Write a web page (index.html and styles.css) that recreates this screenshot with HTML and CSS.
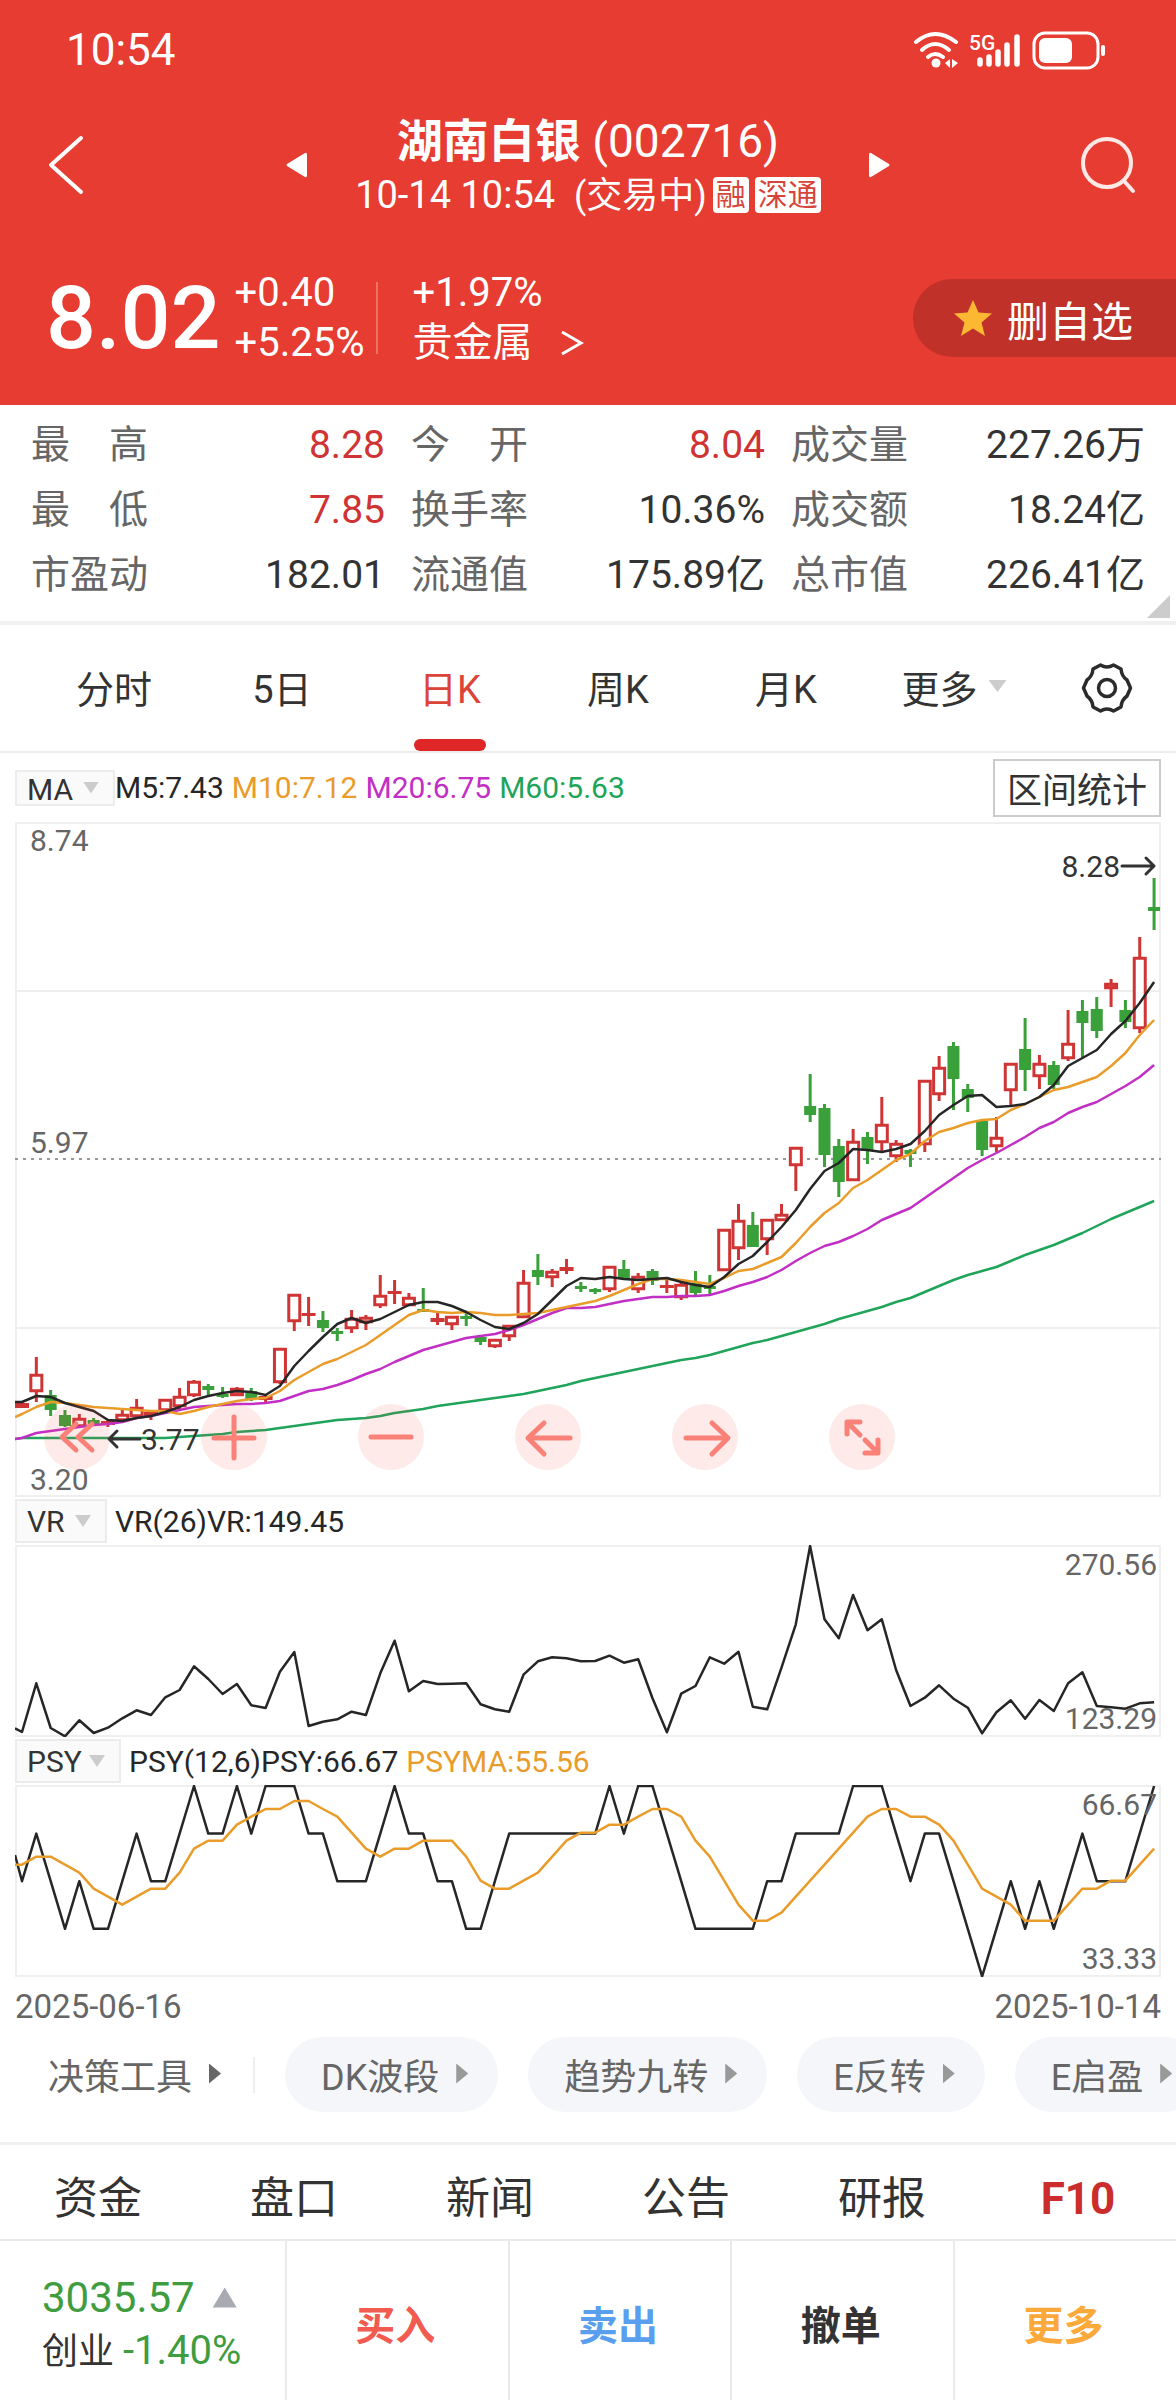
FILE: index.html
```html
<!DOCTYPE html>
<html lang="zh-CN">
<head>
<meta charset="utf-8">
<meta name="viewport" content="width=device-width, initial-scale=1">
<title>湖南白银 (002716)</title>
<link rel="stylesheet" href="styles.css">
</head>
<body>
<header class="top">
  <div class="status">
    <span>10:54</span>
    <svg class="status-icons" width="204" height="44" viewBox="0 0 204 44" aria-hidden="true">
      <g fill="none" stroke="#fff" stroke-width="4" stroke-linecap="round">
        <path d="M8 14Q27 -2 48 14"/><path d="M14 22Q27 10 41 22"/><path d="M20 29Q27 23 35 29"/>
      </g>
      <circle cx="28" cy="35" r="4.500" fill="#fff"/>
      <path d="M42 31v9l-5-5zM44 31v9l6-5z" fill="#fff"/>
      <text x="61" y="22" class="net">5G</text>
      <g stroke="#fff" stroke-width="5.500" stroke-linecap="round">
        <path d="M72 32v4M81 29v7M90 24v12M99 17v19M109 9v27"/>
      </g>
      <rect x="126" y="5" width="64" height="35" rx="11" fill="none" stroke="#fff" stroke-width="3"/>
      <rect x="131" y="10" width="33" height="25" rx="6" fill="#fff"/>
      <rect x="193" y="17" width="4" height="11" rx="2" fill="#fff"/>
    </svg>
  </div>
  <div class="title-row">
    <button class="icon-btn back" aria-label="返回"><svg width="40" height="60" viewBox="0 0 40 60"><path d="M35 3L5 30L35 57" fill="none" stroke="#fff" stroke-width="4" stroke-linecap="round" stroke-linejoin="round"/></svg></button>
    <button class="icon-btn prev" aria-label="上一只"><svg width="24" height="28" viewBox="0 0 24 28"><path d="M20 2Q22 1 22 4V24Q22 27 20 26L2 15Q1 14 2 13Z" fill="#fff"/></svg></button>
    <div class="title">
      <h1><b>湖南白银</b> (002716)</h1>
      <p><span>10-14 10:54&nbsp; <span class="state">(交易中)</span></span><span class="badge">融</span><span class="badge">深通</span></p>
    </div>
    <button class="icon-btn next" aria-label="下一只"><svg width="24" height="28" viewBox="0 0 24 28"><path d="M4 2Q2 1 2 4V24Q2 27 4 26L22 15Q23 14 22 13Z" fill="#fff"/></svg></button>
    <button class="icon-btn search" aria-label="搜索"><svg width="60" height="60" viewBox="0 0 60 60" fill="none" stroke="#ffe9e6" stroke-width="4" stroke-linecap="round"><circle cx="31" cy="28" r="24"/><path d="M48 46L57 56"/></svg></button>
  </div>
  <div class="quote">
    <strong class="price">8.02</strong>
    <div class="pair change"><span>+0.40</span><span>+5.25%</span></div>
    <div class="pair sector"><span>+1.97%</span><a href="#sector">贵金属<svg width="24" height="26" viewBox="0 0 24 26"><path d="M2 2L21 13L2 24" fill="none" stroke="#fff" stroke-width="3"/></svg></a></div>
    <button class="fav"><svg width="40" height="38" viewBox="0 0 40 38"><path d="M20 1L25.500 13.500L39 14.500L28.500 23.500L32 37L20 29.500L8 37L11.500 23.500L1 14.500L14.500 13.500Z" fill="#fdb833"/></svg>删自选</button>
  </div>
</header>

<main>
<dl class="stats">
  <div><dt><span>最</span><span>高</span></dt><dd class="up">8.28</dd></div>
  <div><dt><span>今</span><span>开</span></dt><dd class="up">8.04</dd></div>
  <div><dt>成交量</dt><dd>227.26万</dd></div>
  <div><dt><span>最</span><span>低</span></dt><dd class="up">7.85</dd></div>
  <div><dt>换手率</dt><dd>10.36%</dd></div>
  <div><dt>成交额</dt><dd>18.24亿</dd></div>
  <div><dt>市盈动</dt><dd>182.01</dd></div>
  <div><dt>流通值</dt><dd>175.89亿</dd></div>
  <div><dt>总市值</dt><dd>226.41亿</dd></div>
</dl>

<nav class="periods">
  <button>分时</button>
  <button>5日</button>
  <button class="active">日K</button>
  <button>周K</button>
  <button>月K</button>
  <button class="more">更多</button>
  <button class="gear" aria-label="设置"><svg width="52" height="52" viewBox="0 0 52 52" fill="none" stroke="#2b2b2b" stroke-width="3.500" stroke-linejoin="round"><circle cx="26" cy="26" r="8.500"/><path d="M19.500 3Q26 7 32.500 3L40 7Q40.500 14 46 18L49.500 26L46 34Q40.500 38 40 45L32.500 49Q26 45 19.500 49L12 45Q11.500 38 6 34L2.500 26L6 18Q11.500 14 12 7Z"/></svg></button>
</nav>

<section class="charts">
  <div class="bar bar-ma">
    <label class="pick"><select aria-label="主图指标"><option>MA</option></select></label>
    <span class="k">M5:7.43</span><span class="o">M10:7.12</span><span class="m">M20:6.75</span><span class="g">M60:5.63</span>
    <button class="range">区间统计</button>
  </div>
  <div class="kline">
    <svg id="kline" class="plot" viewBox="15 822 1146 675"></svg>
    <div class="tools" role="toolbar">
      <button aria-label="最早"><svg viewBox="0 0 66 66"><path d="M32 20L18 33L32 46M48 20L34 33L48 46"/></svg></button>
      <button aria-label="放大"><svg viewBox="0 0 66 66"><path d="M33 13V54M13 34H53"/></svg></button>
      <button aria-label="缩小"><svg viewBox="0 0 66 66"><path d="M13 33H53"/></svg></button>
      <button aria-label="左移"><svg viewBox="0 0 66 66"><path d="M55 34H14M29 19L13 34L29 50"/></svg></button>
      <button aria-label="右移"><svg viewBox="0 0 66 66"><path d="M14 34H55M40 19L56 34L40 50"/></svg></button>
      <button aria-label="全屏"><svg viewBox="0 0 66 66"><path d="M18 30V18H31M19 19L31 31M49 36V49H36M48 48L36 36"/></svg></button>
    </div>
  </div>
  <div class="bar">
    <label class="pick"><select aria-label="副图一指标"><option>VR</option></select></label>
    <span class="k">VR(26)VR:149.45</span>
  </div>
  <svg id="vr" class="plot" viewBox="15 1545 1146 192"></svg>
  <div class="bar">
    <label class="pick wide"><select aria-label="副图二指标"><option>PSY</option></select></label>
    <span class="k">PSY(12,6)PSY:66.67</span><span class="o">PSYMA:55.56</span>
  </div>
  <svg id="psy" class="plot" viewBox="15 1785 1146 192"></svg>
  <div class="dates"><time>2025-06-16</time><time>2025-10-14</time></div>
</section>

<div class="chips">
  <button class="lead">决策工具</button>
  <button class="chip">DK波段</button>
  <button class="chip">趋势九转</button>
  <button class="chip">E反转</button>
  <button class="chip">E启盈</button>
</div>

<nav class="info">
  <a href="#funds">资金</a><a href="#depth">盘口</a><a href="#news">新闻</a><a href="#notices">公告</a><a href="#reports">研报</a><a href="#f10" class="f10">F10</a>
</nav>
</main>

<footer class="trade">
  <div class="index">
    <p class="value">3035.57<i></i></p>
    <p class="name">创业 <span>-1.40%</span></p>
  </div>
  <button class="buy">买入</button>
  <button class="sell">卖出</button>
  <button class="cancel">撤单</button>
  <button class="other">更多</button>
</footer>
<script src="chart.js"></script>
</body>
</html>
```
FILE: styles.css
```css
* { box-sizing: border-box; }
body, h1, p, dl, dd { margin: 0; }
body {
  background: #fff;
  color: #333;
  font-family: Roboto, "Noto Sans CJK SC", sans-serif;
  overflow-x: hidden;
}
button, select {
  font: inherit;
  color: inherit;
  background: none;
  border: 0;
  padding: 0;
  margin: 0;
}
a { color: inherit; text-decoration: none; }
svg { display: block; }

/* header */
.top { background: #e63c32; color: #fff; padding-bottom: 37px; }
.status {
  display: flex;
  justify-content: space-between;
  align-items: center;
  height: 100px;
  padding: 0 64px 0 66px;
  font-size: 44px;
}
.net { fill: #fff; font-size: 21px; font-weight: 500; }
.title-row {
  display: flex;
  align-items: center;
  justify-content: space-between;
  height: 106px;
  margin-top: 12px;
  padding: 0 40px 0 46px;
}
.title { text-align: center; margin: 0 auto; }
.title h1 { font-size: 46px; font-weight: 400; line-height: 60px; }
.title p { display: flex; align-items: center; gap: 6px; font-size: 38px; line-height: 48px; }
.state { font-size: 36px; }
.badge {
  background: #fff;
  color: #d5453b;
  border-radius: 4px;
  font-size: 30px;
  line-height: 36px;
  padding: 0 3px;
}
.prev { margin-left: 199px; }
.next { margin-right: 185px; }
.title, .prev, .next, .back, .search { flex: none; }

.quote { display: flex; align-items: center; height: 100px; margin-top: 50px; padding-left: 46px; }
.price { font-size: 88px; font-weight: 500; line-height: 100px; }
.pair { display: flex; flex-direction: column; font-size: 40px; line-height: 50px; }
.change { margin-left: 14px; padding-right: 14px; position: relative; }
.change::after {
  content: "";
  position: absolute;
  right: 0;
  top: 14px;
  bottom: 14px;
  width: 2px;
  background: #ee7069;
}
.sector { margin-left: 34px; }
.sector a { display: flex; align-items: center; gap: 28px; }
.fav {
  display: flex;
  align-items: center;
  gap: 14px;
  height: 78px;
  margin-left: auto;
  padding: 0 43px 0 40px;
  border-radius: 39px 0 0 39px;
  background: #c03129;
  font-size: 42px;
}

/* quote figures */
.stats {
  position: relative;
  display: grid;
  grid-template-columns: repeat(3, 1fr);
  column-gap: 26px;
  padding: 8px 31px 13px;
  border-bottom: 4px solid #f0f0f0;
  font-size: 39px;
  line-height: 65px;
}
.stats > div { display: flex; justify-content: space-between; }
.stats dt { display: flex; justify-content: space-between; width: 117px; color: #666; }
.stats .up { color: #cf3333; }
.stats::after {
  content: "";
  position: absolute;
  right: 6px;
  bottom: 3px;
  width: 23px;
  height: 23px;
  background: #ccc;
  clip-path: polygon(100% 0, 100% 100%, 0 100%);
}

/* period tabs */
.periods {
  display: flex;
  height: 128px;
  padding-left: 30px;
  border-bottom: 2px solid #ececec;
  font-size: 38px;
}
.periods button { flex: 168; position: relative; padding-bottom: 4px; }
.periods .active { color: #dc4437; }
.periods .active::after {
  content: "";
  position: absolute;
  left: 50%;
  bottom: 0;
  width: 72px;
  height: 12px;
  margin-left: -36px;
  border-radius: 6px;
  background: #df2727;
}
.periods .more { display: flex; align-items: center; justify-content: center; gap: 11px; }
.periods .more::after {
  content: "";
  width: 18px;
  height: 12px;
  background: #ccc;
  clip-path: polygon(0 0, 100% 0, 50% 100%);
}
.periods .gear { flex: 138; display: flex; align-items: center; justify-content: center; padding: 0; }

/* indicator bars and plots */
.charts { padding: 0 15px; font-size: 30px; }
.bar { display: flex; align-items: center; gap: 8px; height: 48px; }
.bar-ma { height: 69px; }
.bar-ma .pick { width: 100px; height: 36px; margin-right: -8px; }
.pick {
  position: relative;
  width: 92px;
  height: 44px;
  border: 2px solid #ececec;
  background: #fafafa;
}
.pick.wide { width: 106px; }
.pick select { appearance: none; display: block; width: 100%; height: 100%; padding-left: 10px; }
.pick::after {
  content: "";
  position: absolute;
  right: 14px;
  top: 50%;
  width: 16px;
  height: 12px;
  margin-top: -6px;
  background: #ccc;
  clip-path: polygon(0 0, 100% 0, 50% 100%);
  pointer-events: none;
}
.k { color: #262626; }
.o { color: #e99c2a; }
.m { color: #c22fc4; }
.g { color: #1fa45a; }
.range {
  height: 58px;
  margin-left: auto;
  padding: 0 12px;
  border: 2px solid #ccc;
  font-size: 35px;
}
.plot { width: 100%; height: auto; font-size: 30px; }
.kline { position: relative; }
.tools { position: absolute; left: 29px; bottom: 27px; display: flex; gap: 91px; }
.tools button { width: 66px; height: 66px; border-radius: 50%; background: rgba(240, 80, 70, 0.12); }
.tools path {
  fill: none;
  stroke: #fa8177;
  stroke-width: 5;
  stroke-linecap: round;
  stroke-linejoin: round;
}
.dates { display: flex; justify-content: space-between; line-height: 60px; font-size: 33px; color: #666; }

/* strategy chips */
.chips {
  display: flex;
  gap: 30px;
  height: 108px;
  padding: 0 0 30px 48px;
  overflow: hidden;
  border-bottom: 3px solid #f0f0f0;
  color: #666;
  font-size: 36px;
}
.chips button { flex: none; display: flex; align-items: center; gap: 17px; height: 75px; padding-bottom: 2px; }
.chips button::after {
  content: "";
  width: 12px;
  height: 20px;
  background: #999;
  clip-path: polygon(0 0, 100% 50%, 0 100%);
}
.chips .lead { position: relative; padding-right: 34px; }
.chips .lead::after { background: #666; }
.chips .lead::before {
  content: "";
  position: absolute;
  right: 0;
  top: 20px;
  width: 2px;
  height: 36px;
  background: #eee;
}
.chips .chip { padding: 0 30px 2px 36px; border-radius: 38px; background: #f5f6fa; }

/* bottom navigation */
.info {
  display: grid;
  grid-template-columns: repeat(6, 1fr);
  padding-top: 14px;
  border-bottom: 2px solid #eaeaea;
  font-size: 44px;
  line-height: 80px;
  text-align: center;
}
.f10 { color: #cb2d2d; font-weight: 700; }
.trade { display: grid; grid-template-columns: 285fr repeat(4, 223fr); height: 159px; }
.trade button {
  padding: 4px 4px 0 0;
  border-left: 2px solid #eaeaea;
  font-size: 40px;
  font-weight: 700;
}
.index { padding: 30px 0 0 42px; line-height: 53px; white-space: nowrap; }
.value { display: flex; align-items: center; gap: 18px; font-size: 42px; color: #3f9c3f; }
.value i { width: 24px; height: 20px; background: #a9abb3; clip-path: polygon(50% 0, 100% 100%, 0 100%); }
.name { font-size: 36px; }
.name span { font-size: 40px; color: #3f9c3f; }
.buy { color: #f15b50; }
.sell { color: #5a9fee; }
.other { color: #fba93b; }
```
FILE: chart.js
```js
const LEFT = 15, RIGHT = 1161, FIRST = 22, STEP = 14.33;
const px = i => FIRST + STEP * i;

const RED = '#cf3535', GREEN = '#3aa03a', INK = '#262626', ORANGE = '#e99c2a';

// kind, high, body top, body bottom, low
const candles = [
['r',1402,1403,1408,1408],['r',1357,1374,1392,1402],['g',1390,1395,1410,1416],['g',1410,1415,1426,1427],
['r',1414,1418,1427,1427],['g',1418,1420,1424,1426],['r',1419,1421,1425,1427],['r',1410,1414,1421,1421],
['r',1399,1407,1417,1417],['r',1410,1412,1416,1420],['r',1399,1399,1411,1414],['r',1388,1396,1407,1409],
['r',1380,1381,1396,1397],['g',1384,1386,1390,1395],['g',1387,1394,1396,1398],['f',1387,1388,1396,1396],
['g',1388,1391,1399,1401],['r',1395,1396,1400,1402],['r',1348,1348,1383,1384],['r',1294,1294,1322,1331],
['r',1297,1313,1316,1326],['g',1311,1320,1328,1332],['g',1328,1331,1333,1341],['r',1310,1318,1329,1333],
['r',1315,1317,1323,1330],['r',1275,1295,1306,1308],['r',1280,1291,1294,1304],['r',1293,1297,1306,1306],
['g',1288,1309,1311,1312],['r',1313,1318,1322,1325],['r',1316,1316,1325,1330],['g',1312,1316,1318,1326],
['g',1337,1337,1342,1345],['r',1339,1339,1347,1348],['r',1325,1325,1337,1341],['r',1270,1282,1318,1318],
['g',1254,1270,1277,1285],['r',1269,1271,1278,1287],['r',1259,1267,1271,1274],['g',1282,1286,1288,1292],
['g',1288,1289,1291,1294],['r',1266,1266,1290,1292],['g',1260,1269,1279,1279],['r',1273,1276,1290,1293],
['g',1269,1271,1281,1285],['r',1279,1285,1288,1293],['r',1283,1284,1298,1300],['g',1271,1283,1293,1295],
['g',1275,1286,1289,1294],['r',1229,1229,1271,1271],['r',1204,1220,1249,1260],['g',1212,1225,1247,1247],
['r',1219,1219,1240,1255],['r',1204,1214,1221,1221],['r',1147,1147,1166,1191],['g',1074,1106,1115,1122],
['g',1104,1108,1155,1167],['g',1139,1146,1182,1197],['r',1129,1141,1181,1181],['g',1132,1137,1150,1164],
['r',1097,1124,1143,1151],['r',1140,1143,1157,1162],['g',1149,1150,1154,1167],['r',1080,1080,1145,1152],
['r',1056,1067,1095,1101],['g',1042,1046,1079,1110],['g',1084,1089,1098,1112],['g',1120,1121,1150,1156],
['r',1117,1137,1147,1152],['r',1063,1063,1091,1106],['g',1018,1049,1070,1091],['r',1055,1063,1077,1089],
['g',1061,1065,1085,1089],['r',1010,1043,1059,1061],['g',1000,1011,1023,1057],['g',997,1009,1031,1038],
['f',979,983,989,1007],['g',1000,1010,1022,1028],['r',937,957,1029,1033],['g',878,907,911,930]
];

// the first value of each line lies on the left edge of the plot
const ma5 = [1402,1402,1396,1397,1403,1407,1411,1420,1421,1418,1416,1412,1407,1400,1396,1393,1391,1392,1395,1386,1366,1351,1337,1324,1318,1323,1319,1312,1305,1302,1302,1306,1312,1320,1327,1329,1323,1314,1300,1286,1278,1279,1277,1279,1280,1279,1278,1282,1285,1287,1277,1264,1256,1242,1227,1210,1189,1171,1163,1149,1150,1152,1149,1144,1131,1115,1105,1096,1095,1107,1106,1104,1097,1085,1066,1058,1050,1034,1021,1003,982];
const ma10 = [1417,1414,1407,1402,1403,1405,1407,1408,1409,1410,1411,1411,1414,1411,1407,1404,1401,1399,1398,1391,1380,1372,1364,1359,1352,1345,1335,1325,1315,1310,1312,1313,1312,1313,1315,1315,1314,1313,1310,1307,1304,1301,1296,1290,1284,1279,1279,1280,1282,1284,1278,1271,1269,1263,1257,1243,1227,1213,1203,1188,1180,1170,1160,1154,1141,1132,1128,1123,1120,1119,1110,1104,1097,1090,1087,1082,1077,1066,1053,1035,1020];
const ma20 = [1439,1438,1433,1431,1429,1427,1425,1424,1422,1418,1416,1413,1410,1407,1406,1405,1404,1404,1403,1401,1396,1391,1389,1385,1380,1374,1369,1362,1356,1350,1346,1342,1338,1336,1334,1330,1325,1319,1313,1308,1308,1307,1304,1301,1299,1297,1297,1296,1296,1295,1291,1286,1282,1277,1270,1261,1253,1246,1242,1236,1229,1220,1214,1208,1198,1188,1178,1168,1160,1153,1145,1137,1128,1122,1113,1107,1102,1094,1086,1077,1065];
const ma60 = [1439,1438,1438,1438,1438,1438,1438,1438,1438,1438,1438,1438,1437,1436,1435,1434,1432,1431,1430,1428,1426,1424,1422,1420,1419,1418,1416,1413,1411,1409,1406,1404,1402,1400,1398,1396,1394,1391,1388,1385,1381,1378,1375,1372,1369,1366,1363,1360,1358,1355,1351,1347,1343,1340,1336,1332,1328,1324,1319,1315,1311,1307,1302,1298,1292,1286,1280,1275,1271,1267,1261,1255,1250,1245,1239,1233,1226,1219,1213,1207,1201];

// thirds of a pixel below the origin of the two lower plots
const ORIGIN = 1480;
const vr = [745,756,610,744,769,721,759,743,715,691,705,652,630,559,597,642,612,676,684,575,516,738,725,718,695,705,580,482,634,603,612,611,610,673,688,695,584,544,532,535,544,543,527,548,538,655,757,641,618,532,551,515,680,688,563,433,198,418,475,345,451,418,570,678,653,616,656,683,760,697,661,716,660,693,610,577,678,682,686,670,667];
const psyma = [1154,1154,1130,1130,1154,1178,1226,1250,1274,1250,1226,1226,1178,1106,1082,1082,1034,1010,987,987,963,963,987,1010,1058,1106,1130,1106,1106,1082,1082,1082,1130,1202,1226,1226,1202,1178,1130,1082,1058,1058,1034,1034,1010,987,987,1010,1082,1130,1202,1274,1322,1322,1298,1250,1202,1154,1106,1058,1010,987,987,1010,1010,1034,1082,1154,1226,1250,1274,1322,1322,1322,1274,1226,1226,1202,1202,1154,1106];
// PSY in steps of one day out of twelve, counted down from 66.67
const psy = [1.45,2,1,2,3,2,3,3,2,1,2,2,1,0,1,1,0,1,0,0,0,1,1,2,2,2,1,0,1,1,2,2,3,3,2,1,1,1,1,1,1,1,0,1,0,0,1,2,3,3,3,3,3,2,2,1,1,1,1,0,0,0,1,2,1,1,2,3,4,3,2,3,2,3,2,1,2,2,2,1,0];

const line = (ys, color) =>
  `<polyline fill="none" stroke="${color}" stroke-width="2.5" stroke-linejoin="round" points="${
    ys.map((y, n) => `${n ? px(n - 1).toFixed(1) : LEFT},${y.toFixed(1)}`).join(' ')}"/>`;
const rule = (y, extra = '') =>
  `<line x1="${LEFT}" x2="${RIGHT}" y1="${y}" y2="${y}" stroke="#eee" stroke-width="2" ${extra}/>`;
const frame = (top, height) =>
  `<rect x="${LEFT + 1}" y="${top + 1}" width="${RIGHT - LEFT - 2}" height="${height - 2}" fill="none" stroke="#efefef" stroke-width="2"/>`;
const label = (x, y, text, anchor = 'start', fill = '#666') =>
  `<text x="${x}" y="${y}" text-anchor="${anchor}" fill="${fill}">${text}</text>`;

function candle([kind, high, top, bottom, low], i) {
  const x = px(i), color = kind === 'g' ? GREEN : RED;
  const stems = `<path d="M${x} ${high}V${top}M${x} ${bottom}V${low}" stroke="${color}" stroke-width="3"/>`;
  if (kind === 'g')
    return stems + `<rect x="${x - 6}" y="${top}" width="12" height="${Math.max(3, bottom - top)}" fill="${color}"/>`;
  const h = bottom - top;
  if (h <= 5)
    return stems + `<rect x="${x - 7}" y="${top}" width="14" height="${h}" fill="${color}"/>`;
  return stems + `<rect x="${x - 5.5}" y="${top + 1.25}" width="11" height="${h - 2.5}" fill="${kind === 'f' ? '#f25a5a' : '#fff'}" stroke="${color}" stroke-width="3"/>`;
}

const arrow = d => `<path d="${d}" fill="none" stroke="#333" stroke-width="3" stroke-linecap="round" stroke-linejoin="round"/>`;

document.getElementById('kline').innerHTML =
  frame(822, 675) + rule(991) + rule(1328) +
  `<line x1="${LEFT}" x2="${RIGHT}" y1="1159" y2="1159" stroke="#999" stroke-width="2" stroke-dasharray="3 5"/>` +
  candles.map(candle).join('') +
  line(ma60, '#1fa45a') + line(ma20, '#c22fc4') + line(ma10, ORANGE) + line(ma5, INK) +
  label(30, 851, '8.74') + label(30, 1153, '5.97') + label(30, 1490, '3.20') +
  label(1120, 877, '8.28', 'end', '#333') + arrow('M1122 866H1154M1146 858L1154 866L1146 874') +
  label(141, 1450, '3.77', 'start', '#333') + arrow('M140 1439H109M117 1431L109 1439L117 1447');

document.getElementById('vr').innerHTML =
  frame(1545, 192) + line(vr.map(v => ORIGIN + v / 3), INK) +
  label(1157, 1575, '270.56', 'end') + label(1157, 1729, '123.29', 'end');

document.getElementById('psy').innerHTML =
  frame(1785, 192) + line(psy.map(v => 1786 + v * 47.6), INK) + line(psyma.map(v => ORIGIN + v / 3), ORANGE) +
  label(1157, 1815, '66.67', 'end') + label(1157, 1969, '33.33', 'end');
```
